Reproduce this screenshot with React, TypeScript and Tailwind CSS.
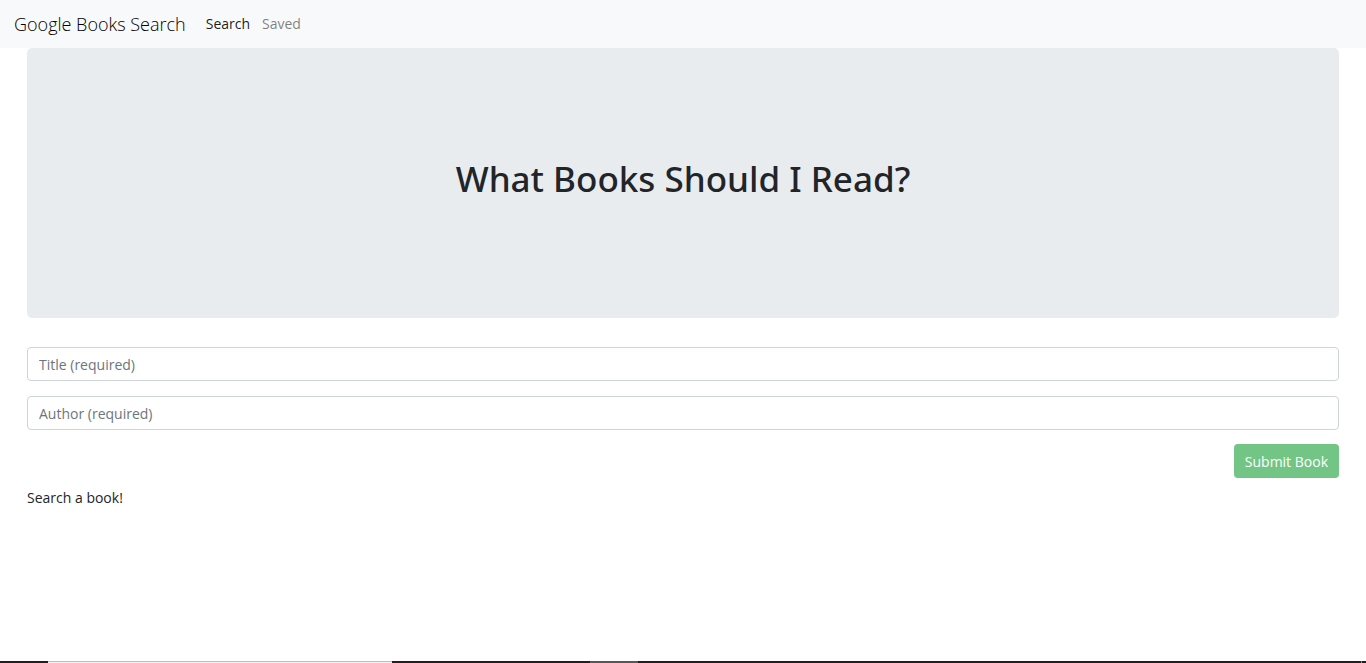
import { useState } from "react";

type FieldProps = {
  name: string;
  label: string;
  value: string;
  onChange: (value: string) => void;
};

function Field({ name, label, value, onChange }: FieldProps) {
  return (
    <input
      name={name}
      type="text"
      aria-label={label}
      placeholder={label}
      value={value}
      onChange={(event) => onChange(event.target.value)}
      className="block h-[34px] w-full rounded-[4px] border border-[#ced4da] bg-white px-[11px] text-sm leading-8 text-[#495057] placeholder:text-[#6c757d]"
    />
  );
}

function NavBar() {
  return (
    <nav className="flex h-12 items-center bg-[#f8f9fa] px-[14px]">
      <a href="#home" className="mr-5 text-lg leading-6 font-light text-black">
        Google Books Search
      </a>
      <div className="flex gap-3 text-sm">
        <a href="#search" className="text-black/90">
          Search
        </a>
        <a href="#saved" className="text-black/50">
          Saved
        </a>
      </div>
    </nav>
  );
}

function BottomStrip() {
  return (
    <div className="flex h-[2px] bg-[#231f20]" aria-hidden="true">
      <div className="w-12" />
      <div className="w-[344px] border-t border-[#bfbfbf] bg-[#f2f2f2]" />
      <div className="w-[198px]" />
      <div className="w-12 bg-[#595657]" />
      <div className="flex-1" />
      <div className="mr-1 w-px bg-[#8a8888]" />
    </div>
  );
}

export default function App() {
  const [title, setTitle] = useState("");
  const [author, setAuthor] = useState("");

  return (
    <div className="flex min-h-screen flex-col bg-white font-['Open_Sans','Noto_Sans',sans-serif] text-[#212529]">
      <NavBar />
      <main className="flex-1 px-[27px]">
        <header className="flex h-[270px] items-center justify-center rounded-[5px] bg-[#e9ecef] pb-2">
          <h1 className="text-[35px] leading-10 font-['Noto_Sans',sans-serif] font-medium">
            What Books Should I Read?
          </h1>
        </header>
        <form
          className="mt-[29px] flex flex-col gap-[15px]"
          onSubmit={(event) => event.preventDefault()}
        >
          <Field name="title" label="Title (required)" value={title} onChange={setTitle} />
          <Field name="author" label="Author (required)" value={author} onChange={setAuthor} />
          <button
            type="submit"
            disabled={!title || !author}
            className="-mt-px h-[34px] self-end rounded-[4px] bg-[#28a745] px-[11px] pt-[2px] text-sm font-medium text-white disabled:opacity-65"
          >
            Submit Book
          </button>
        </form>
        <p className="mt-[10px] text-sm">Search a book!</p>
      </main>
      <BottomStrip />
    </div>
  );
}
